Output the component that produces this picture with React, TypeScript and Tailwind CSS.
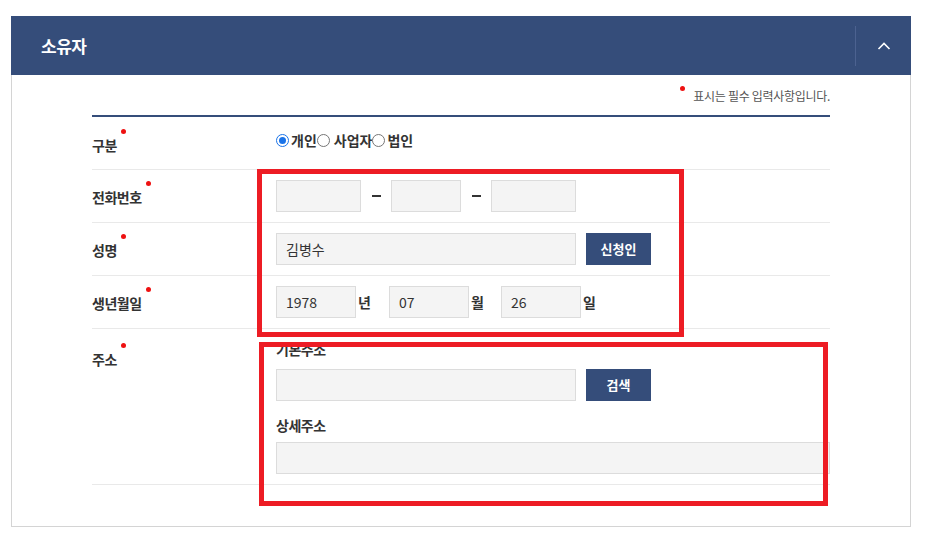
import React from "react";

const F = { fontFamily: '"Noto Sans CJK KR", "Noto Sans", sans-serif' };

function Label({ text }: { text: string }) {
  return (
    <span className="relative inline-block text-[14px] font-bold leading-[20px] tracking-[-0.5px] text-[#333]">
      {text}
      <span className="absolute -right-[9px] -top-[6px] h-[5px] w-[5px] rounded-full bg-[#ee1111]" />
    </span>
  );
}

function Input({ w, value }: { w: string; value?: string }) {
  return (
    <div
      className={`${w} h-[32px] border border-[#dcdcdc] bg-[#f4f4f4] pl-[9px] text-[14px] leading-[30px] text-[#333]`}
    >
      {value}
    </div>
  );
}

function Btn({ text }: { text: string }) {
  return (
    <div className="flex h-[32px] w-[65px] items-center justify-center bg-[#354d7a] text-[13px] font-bold text-white">
      {text}
    </div>
  );
}

function Radio({ checked, label, gap }: { checked?: boolean; label: string; gap: string }) {
  return (
    <label className="flex items-center">
      {checked ? (
        <span className="flex h-[13px] w-[13px] items-center justify-center rounded-full border-[1.5px] border-[#1a73e8] bg-white">
          <span className="h-[7px] w-[7px] rounded-full bg-[#1a73e8]" />
        </span>
      ) : (
        <span className="h-[13px] w-[13px] rounded-full border border-[#767676] bg-white" />
      )}
      <span className={`${gap} text-[14px] font-bold text-[#333]`}>{label}</span>
    </label>
  );
}

function Dash() {
  return (
    <span className="flex w-[30px] justify-center">
      <span className="h-[2px] w-[9px] bg-[#333]" />
    </span>
  );
}

export default function App() {
  return (
    <div className="relative min-h-[550px] w-[941px] bg-white" style={F}>
      <div className="pl-[11px] pt-[16px]">
        <div className="w-[900px]">
          <div className="flex h-[59px] items-center bg-[#354d7a]">
            <div className="flex-1 pl-[30px] text-[17px] font-bold tracking-[-0.5px] text-white">소유자</div>
            <div className="h-[40px] w-px bg-[#4c6290]" />
            <div className="flex w-[55px] items-center justify-center">
              <svg width="16" height="10" viewBox="0 0 16 10" fill="none">
                <path d="M2.5 8 L8 2.5 L13.5 8" stroke="white" strokeWidth="1.6" />
              </svg>
            </div>
          </div>
          <div className="border-x border-b border-[#d4d4d4] pb-[41px] pl-[80px] pr-[80px] pt-[12px]">
            <div className="flex justify-end">
              <span className="relative text-[12px] leading-[18px] tracking-[-0.3px] text-[#555]">
                <span className="absolute -left-[13px] -top-[1px] h-[5px] w-[5px] rounded-full bg-[#ee1111]" />
                표시는 필수 입력사항입니다.
              </span>
            </div>
            <div className="mt-[10px] h-[2px] bg-[#354d7a]" />
            <div className="flex h-[53px] items-center border-b border-[#e9e9e9]">
              <div className="w-[184px] pt-[2px]">
                <Label text="구분" />
              </div>
              <div className="-mt-[5px] flex items-center">
                <Radio checked label="개인" gap="ml-[2px]" />
                <Radio label="사업자" gap="ml-[4px]" />
                <Radio label="법인" gap="ml-[2px]" />
              </div>
            </div>
            <div className="flex h-[53px] items-center border-b border-[#e9e9e9]">
              <div className="w-[184px]">
                <Label text="전화번호" />
              </div>
              <Input w="w-[85px]" />
              <Dash />
              <Input w="w-[70px]" />
              <Dash />
              <Input w="w-[85px]" />
            </div>
            <div className="flex h-[53px] items-center border-b border-[#e9e9e9]">
              <div className="w-[184px]">
                <Label text="성명" />
              </div>
              <Input w="w-[300px]" value="김병수" />
              <div className="ml-[10px]">
                <Btn text="신청인" />
              </div>
            </div>
            <div className="flex h-[53px] items-center border-b border-[#e9e9e9]">
              <div className="w-[184px]">
                <Label text="생년월일" />
              </div>
              <Input w="w-[80px]" value="1978" />
              <span className="ml-[2px] mr-[17px] w-[14px] text-[14px] font-bold text-[#333]">년</span>
              <Input w="w-[80px]" value="07" />
              <span className="ml-[2px] mr-[16px] w-[14px] text-[14px] font-bold text-[#333]">월</span>
              <Input w="w-[80px]" value="26" />
              <span className="ml-[2px] w-[14px] text-[14px] font-bold text-[#333]">일</span>
            </div>
            <div className="flex border-b border-[#e9e9e9] pb-[10px]">
              <div className="w-[184px] pt-[17px]">
                <Label text="주소" />
              </div>
              <div className="flex-1 pt-[11px]">
                <div className="text-[14px] font-bold leading-[18px] tracking-[-0.5px] text-[#333]">기본주소</div>
                <div className="mt-[11px] flex">
                  <Input w="w-[300px]" />
                  <div className="ml-[10px]">
                    <Btn text="검색" />
                  </div>
                </div>
                <div className="mt-[15px] text-[14px] font-bold leading-[18px] tracking-[-0.5px] text-[#333]">상세주소</div>
                <div className="mt-[8px]">
                  <Input w="w-full" />
                </div>
              </div>
            </div>
          </div>
        </div>
      </div>
      <div className="pointer-events-none absolute left-[257px] top-[169px] h-[168px] w-[427px] border-[5px] border-[#ed1c24]" />
      <div className="pointer-events-none absolute left-[259px] top-[342px] h-[164px] w-[569px] border-[5px] border-[#ed1c24]" />
    </div>
  );
}
